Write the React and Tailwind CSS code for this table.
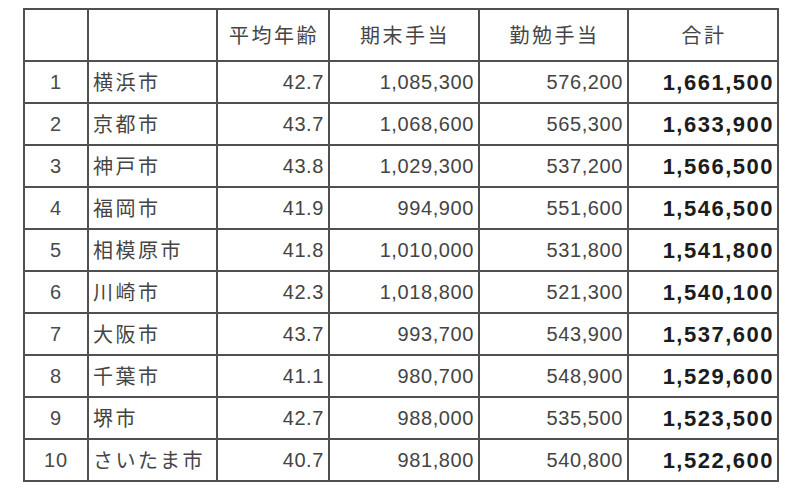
import React from "react";

const rows = [
  ["1", "横浜市", "42.7", "1,085,300", "576,200", "1,661,500"],
  ["2", "京都市", "43.7", "1,068,600", "565,300", "1,633,900"],
  ["3", "神戸市", "43.8", "1,029,300", "537,200", "1,566,500"],
  ["4", "福岡市", "41.9", "994,900", "551,600", "1,546,500"],
  ["5", "相模原市", "41.8", "1,010,000", "531,800", "1,541,800"],
  ["6", "川崎市", "42.3", "1,018,800", "521,300", "1,540,100"],
  ["7", "大阪市", "43.7", "993,700", "543,900", "1,537,600"],
  ["8", "千葉市", "41.1", "980,700", "548,900", "1,529,600"],
  ["9", "堺市", "42.7", "988,000", "535,500", "1,523,500"],
  ["10", "さいたま市", "40.7", "981,800", "540,800", "1,522,600"],
];

const jp = "font-['Noto_Sans_CJK_JP','Noto_Sans',sans-serif]";
const num = "font-['Liberation_Sans',Arial,sans-serif]";

export default function App() {
  return (
    <div className="w-[800px] h-[498px] bg-white pt-[8px] pl-[23px]">
      <div className="grid grid-cols-[62px_127px_110px_148px_147px_148px] grid-rows-[50px_repeat(10,40px)] gap-[2px] p-[2px] bg-[#505050] w-max">
        <div className="bg-white" />
        <div className="bg-white" />
        {["平均年齢", "期末手当", "勤勉手当", "合計"].map((h) => (
          <div
            key={h}
            className={`${jp} bg-white flex items-center justify-center text-[20px] tracking-[2.5px] text-[#454545] pl-[2px]`}
          >
            {h}
          </div>
        ))}
        {rows.map((r) => (
          <React.Fragment key={r[0]}>
            <div className={`${num} bg-white flex items-center justify-center text-[20px] text-[#4a4a4a] tracking-[1px]`}>
              {r[0]}
            </div>
            <div className={`${jp} bg-white flex items-center pl-[4px] text-[20px] tracking-[2.5px] text-[#454545]`}>
              {r[1]}
            </div>
            <div className={`${num} bg-white flex items-center justify-end pr-[4px] text-[20px] tracking-[0.6px] text-[#444444]`}>
              {r[2]}
            </div>
            <div className={`${num} bg-white flex items-center justify-end pr-[4px] text-[20px] tracking-[0.6px] text-[#444444]`}>
              {r[3]}
            </div>
            <div className={`${num} bg-white flex items-center justify-end pr-[4px] text-[20px] tracking-[0.6px] text-[#444444]`}>
              {r[4]}
            </div>
            <div className={`${num} bg-white flex items-center justify-end pr-[3px] text-[22px] font-bold tracking-[1.5px] text-[#1c1c1c]`}>
              {r[5]}
            </div>
          </React.Fragment>
        ))}
      </div>
    </div>
  );
}
